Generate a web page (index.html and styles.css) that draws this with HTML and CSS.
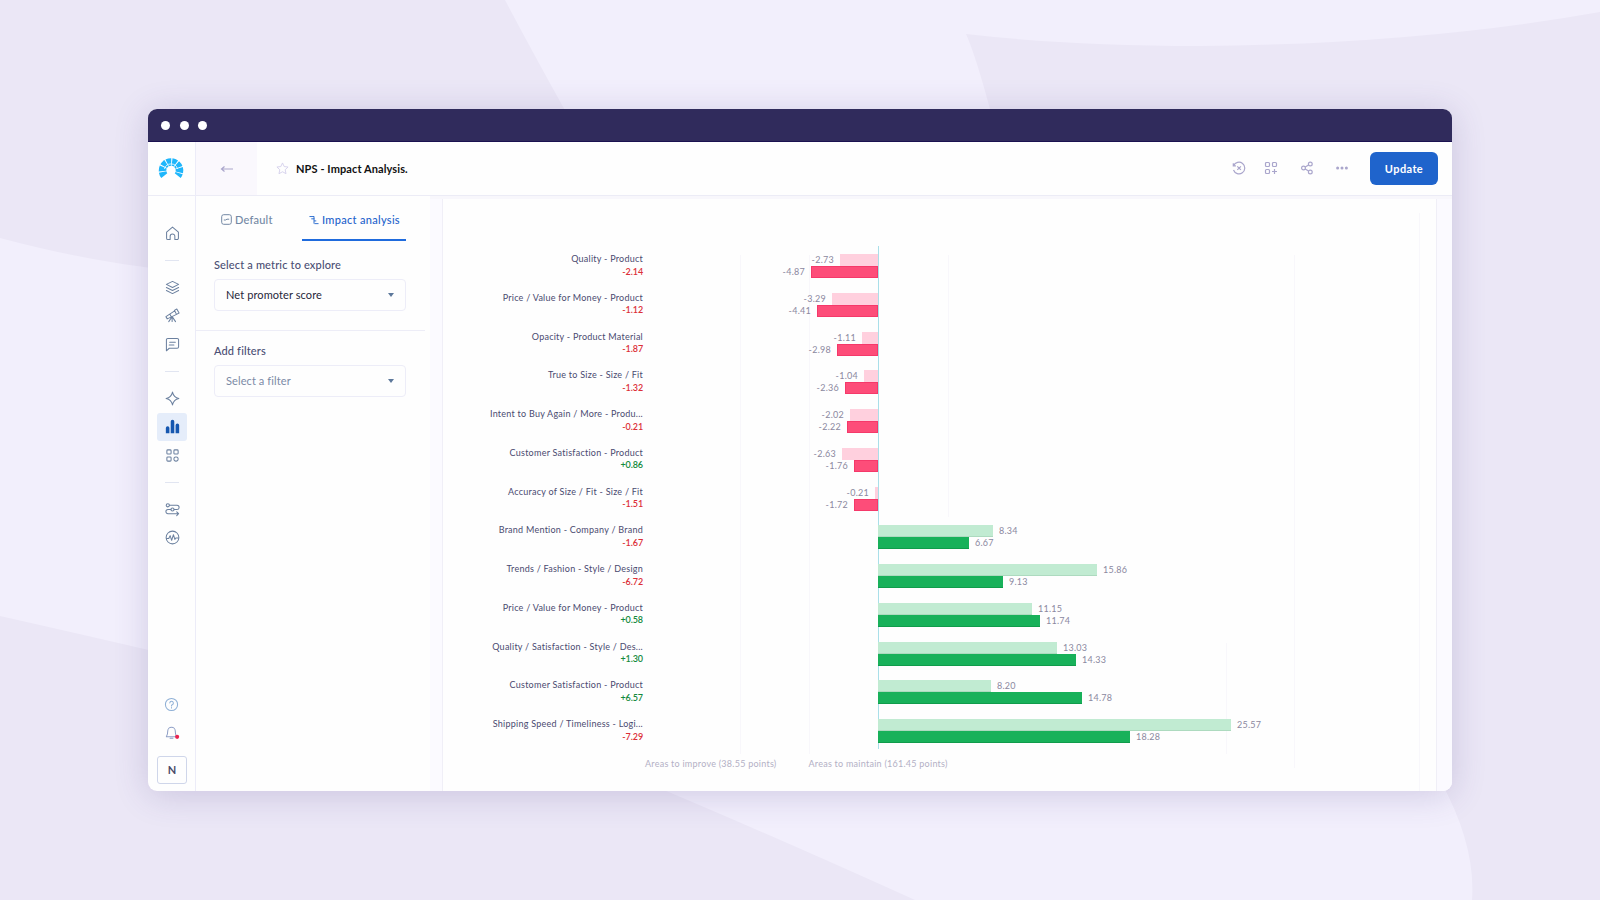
FILE: index.html
```html
<!DOCTYPE html>
<html lang="en">
<head>
    <meta charset="UTF-8">
    <meta name="viewport" content="width=device-width, initial-scale=1.0">
    <title>NPS - Impact Analysis</title>
    <link rel="stylesheet" href="styles.css">
</head>
<body>
    <svg class="backdrop" viewBox="0 0 1600 900" fill="#f2effc">
        <path d="M505 0H1600V12Q1420 44 1200 46Q1070 46 966 34Q982 70 1010 190H610Q550 85 505 0Z"/>
        <path d="M0 238Q90 262 170 270V655Q80 634 0 616Z"/>
        <path d="M640 780Q760 830 915 900H1472Q1476 845 1440 780Z"/>
    </svg>

    <div class="window">
        <div class="titlebar"><i></i><i></i><i></i></div>

        <div class="app">
            <nav class="sidebar">
                <div class="logo">
                    <svg width="26" height="22" viewBox="0 0 26 22" fill="none">
                        <path d="M6.300 17.700A8.500 8.500 0 1 1 19.700 17.700" stroke="#1fb6fb" stroke-width="7.600" stroke-dasharray="4.100 .850"/>
                        <path d="M6.500 11A6.700 6.700 0 0 1 19.500 11" stroke="#fff" stroke-width=".800"/>
                    </svg>
                </div>
                <div class="menu">
                    <a class="item"><svg viewBox="0 0 16 16"><path d="M1.700 6.500L8 1.200l6.300 5.300V13a1.500 1.500 0 0 1-1.500 1.500h-2.300V11a2.500 2.500 0 0 0-5 0v3.500H3.200A1.500 1.500 0 0 1 1.700 13z"/></svg></a>
                    <hr>
                    <a class="item"><svg viewBox="0 0 16 16"><path d="M8 1.500l6.500 3.200L8 8 1.500 4.700zM1.500 8L8 11.200 14.500 8M1.500 11.200L8 14.500l6.500-3.300"/></svg></a>
                    <a class="item"><svg viewBox="0 0 16 16"><path d="M1 9.200L10.300 3l2 3.800L2.400 11.600zM10 2.500L12.600 1 15 5.400l-2.700 1.400M5.200 6.600l1.500 2.700M7.600 9.500v5M7 10l-3 4.500M8.200 10l3 4.500"/></svg></a>
                    <a class="item"><svg viewBox="0 0 16 16"><path d="M3 1.500h10A1.500 1.500 0 0 1 14.500 3v7.500A1.500 1.500 0 0 1 13 12H4.500l-3 2.700V3A1.500 1.500 0 0 1 3 1.500zM5 5.500h6M4.500 8.500h5"/></svg></a>
                    <hr>
                    <a class="item"><svg viewBox="0 0 16 16"><path d="M8 1.200Q9.200 6.800 14.800 8 9.200 9.200 8 14.800 6.800 9.200 1.200 8 6.800 6.800 8 1.200z"/></svg></a>
                    <a class="item active"><svg viewBox="0 0 16 16"><path d="M.9 9.700a1.900 1.900 0 0 1 3.800 0v5.500H.9zM6.100 2.700a1.900 1.900 0 0 1 3.800 0v12.500H6.100zM11.300 6.700a1.900 1.900 0 0 1 3.800 0v8.500h-3.800z"/></svg></a>
                    <a class="item"><svg viewBox="0 0 16 16"><rect x="2" y="2" width="4.500" height="4.500" rx="1"/><rect x="9.500" y="2" width="4.500" height="4.500" rx="1"/><rect x="2" y="9.500" width="4.500" height="4.500" rx="1"/><rect x="9.500" y="9.500" width="4.500" height="4.500" rx="2"/></svg></a>
                    <hr>
                    <a class="item"><svg viewBox="0 0 16 16"><circle cx="3" cy="3.500" r="1.700"/><circle cx="8" cy="8" r="1.700"/><path d="M4.700 3.500h8.100a2.200 2.200 0 0 1 0 4.500H9.700M6.300 8H3.200a2.200 2.200 0 0 0 0 4.500h10M12.500 10.500l2 2-2 2"/></svg></a>
                    <a class="item"><svg viewBox="0 0 16 16"><circle cx="8" cy="8" r="6.800"/><path d="M1.500 9H4l1.500-3 1.600 5L9 5l1.500 5 1-1.500h3"/></svg></a>
                </div>
                <div class="menu-bottom">
                    <a class="item help"><svg viewBox="0 0 16 16"><circle cx="8" cy="8" r="6.500"/><path d="M6.200 6.300a1.900 1.900 0 1 1 2.600 2Q8 8.600 8 9.500M8 11.200v.6"/></svg></a>
                    <a class="item bell"><svg viewBox="0 0 16 16"><path d="M2.500 12.500Q4 10.500 4 6.500a4 4 0 0 1 8 0q0 4 1.500 6zM6.500 14.200h3"/><circle class="dot" cx="14" cy="12.600" r="2.200"/></svg></a>
                    <div class="avatar">N</div>
                </div>
            </nav>

            <div class="main">
                <header class="header">
                    <a class="back"><svg width="14" height="10" viewBox="0 0 14 10"><path d="M13 5H1.500M4.500 2.500L1.500 5l3 2.500"/></svg></a>
                    <svg class="star" width="13" height="13" viewBox="0 0 14 14"><path d="M7 1l1.800 3.900 4.200.5-3.100 2.900.9 4.300L7 10.500l-3.800 2.100.9-4.300L1 5.400l4.200-.5z"/></svg>
                    <h1>NPS - Impact Analysis.</h1>
                    <div class="actions">
                        <svg width="14" height="14" viewBox="0 0 14 14"><path d="M1.600 4.800A5.800 5.800 0 1 1 1.500 9M1.300 2.300v2.600h2.600M5.300 5.300l3.600 3.600M8.900 5.300L5.300 8.900"/></svg>
                        <svg width="14" height="14" viewBox="0 0 14 14"><rect x="1.500" y="1.500" width="4" height="4" rx="1"/><rect x="8.500" y="1.500" width="4" height="4" rx="1"/><rect x="1.500" y="8.500" width="4" height="4" rx="1"/><path d="M8 10.500h5M10.500 8v5"/></svg>
                        <svg class="share" width="14" height="14" viewBox="0 0 14 14"><circle cx="3.500" cy="7" r="1.900"/><circle cx="10.300" cy="3" r="1.900"/><circle cx="10.300" cy="11" r="1.900"/><path d="M5.200 6l3.400-2M5.200 8l3.400 2"/></svg>
                        <svg class="more" width="14" height="14" viewBox="0 0 14 14"><circle cx="2.600" cy="7" r="1.500"/><circle cx="7" cy="7" r="1.500"/><circle cx="11.400" cy="7" r="1.500"/></svg>
                    </div>
                    <button class="update">Update</button>
                </header>

                <div class="content">
                    <aside class="panel">
                        <div class="tabs">
                            <a class="tab"><svg width="11" height="11" viewBox="0 0 11 11"><rect x=".7" y=".7" width="9.600" height="9.600" rx="2"/><path d="M2.800 6h1.700L6 5.200h2.200"/></svg>Default</a>
                            <a class="tab selected"><svg width="10" height="10" viewBox="0 0 11 10"><path d="M.5 1.200h5M2.500 3.700H6M5.500 1v8M5.500 6H8M6 9h4.500"/></svg>Impact analysis</a>
                        </div>
                        <div class="field">
                            <label>Select a metric to explore</label>
                            <div class="select">Net promoter score</div>
                        </div>
                        <div class="field filters">
                            <label>Add filters</label>
                            <div class="select empty">Select a filter</div>
                        </div>
                    </aside>

                    <section class="board">
                        <div class="chart">
                            <svg class="grid" width="993" height="580" viewBox="0 0 993 580">
                                <path d="M297.500 42V541M366.500 42V541M505.500 42V304M783.500 430V541M851.500 42V555M976.500 0V580"/>
                                <path class="zero" d="M435.500 33V536"/>
                            </svg>
                            <div class="row neg"><div class="name">Quality - Product<b class="down">-2.14</b></div><div class="bars"><p>-2.73<i style="width:38px"></i></p><p>-4.87<i style="width:67px"></i></p></div></div>
                            <div class="row neg"><div class="name">Price / Value for Money - Product<b class="down">-1.12</b></div><div class="bars"><p>-3.29<i style="width:46px"></i></p><p>-4.41<i style="width:61px"></i></p></div></div>
                            <div class="row neg"><div class="name">Opacity - Product Material<b class="down">-1.87</b></div><div class="bars"><p>-1.11<i style="width:16px"></i></p><p>-2.98<i style="width:41px"></i></p></div></div>
                            <div class="row neg"><div class="name">True to Size - Size / Fit<b class="down">-1.32</b></div><div class="bars"><p>-1.04<i style="width:14px"></i></p><p>-2.36<i style="width:33px"></i></p></div></div>
                            <div class="row neg"><div class="name">Intent to Buy Again / More - Produ...<b class="down">-0.21</b></div><div class="bars"><p>-2.02<i style="width:28px"></i></p><p>-2.22<i style="width:31px"></i></p></div></div>
                            <div class="row neg"><div class="name">Customer Satisfaction - Product<b class="up">+0.86</b></div><div class="bars"><p>-2.63<i style="width:36px"></i></p><p>-1.76<i style="width:24px"></i></p></div></div>
                            <div class="row neg"><div class="name">Accuracy of Size / Fit - Size / Fit<b class="down">-1.51</b></div><div class="bars"><p>-0.21<i style="width:3px"></i></p><p>-1.72<i style="width:24px"></i></p></div></div>
                            <div class="row pos"><div class="name">Brand Mention - Company / Brand<b class="down">-1.67</b></div><div class="bars"><p><i style="width:115px"></i>8.34</p><p><i style="width:91px"></i>6.67</p></div></div>
                            <div class="row pos"><div class="name">Trends / Fashion - Style / Design<b class="down">-6.72</b></div><div class="bars"><p><i style="width:219px"></i>15.86</p><p><i style="width:125px"></i>9.13</p></div></div>
                            <div class="row pos"><div class="name">Price / Value for Money - Product<b class="up">+0.58</b></div><div class="bars"><p><i style="width:154px"></i>11.15</p><p><i style="width:162px"></i>11.74</p></div></div>
                            <div class="row pos"><div class="name">Quality / Satisfaction - Style / Des...<b class="up">+1.30</b></div><div class="bars"><p><i style="width:179px"></i>13.03</p><p><i style="width:198px"></i>14.33</p></div></div>
                            <div class="row pos"><div class="name">Customer Satisfaction - Product<b class="up">+6.57</b></div><div class="bars"><p><i style="width:113px"></i>8.20</p><p><i style="width:204px"></i>14.78</p></div></div>
                            <div class="row pos"><div class="name">Shipping Speed / Timeliness - Logi...<b class="down">-7.29</b></div><div class="bars"><p><i style="width:353px"></i>25.57</p><p><i style="width:252px"></i>18.28</p></div></div>
                            <div class="legend"><span>Areas to improve (38.55 points)</span><span>Areas to maintain (161.45 points)</span></div>
                        </div>
                    </section>
                </div>
            </div>
        </div>
    </div>
</body>
</html>
```
FILE: styles.css
```css
* {
    box-sizing: border-box;
}

body {
    margin: 0;
    width: 1600px;
    height: 900px;
    overflow: hidden;
    padding: 109px 148px 0;
    background: #ebe7f6;
    font-family: Lato, "Open Sans", sans-serif;
    font-size: 11px;
    color: #26263a;
}

svg {
    display: block;
    flex: none;
}

p, h1 {
    margin: 0;
}

.backdrop {
    position: absolute;
    top: 0;
    left: 0;
    width: 1600px;
    height: 900px;
    z-index: -1;
}

.window {
    width: 1304px;
    height: 682px;
    border-radius: 9px;
    overflow: hidden;
    background: #fefefe;
    box-shadow: 0 4px 34px rgba(70, 55, 130, .2);
}

.titlebar {
    display: flex;
    align-items: center;
    gap: 9.500px;
    height: 33px;
    padding-left: 13px;
    background: #302b5c;
    border-bottom: 1px solid #1a1150;
}

.titlebar i {
    width: 9px;
    height: 9px;
    border-radius: 50%;
    background: #fff;
}

.app {
    display: flex;
    height: 649px;
}

/* sidebar */
.sidebar {
    display: flex;
    flex-direction: column;
    width: 48px;
    border-right: 1px solid #ececf8;
}

.logo {
    display: flex;
    align-items: center;
    justify-content: center;
    height: 54px;
    padding: 0 1px 0 0;
    border-bottom: 1px solid #ececf6;
}

.menu {
    flex: 1;
    padding: 23px 0 0 9px;
}

.item {
    display: flex;
    align-items: center;
    justify-content: center;
    width: 30px;
    height: 28.500px;
    border-radius: 3px;
}

.item svg {
    width: 15px;
    height: 15px;
    overflow: visible;
    fill: none;
    stroke: #6b809f;
    stroke-width: 1.100;
    stroke-linejoin: round;
    stroke-linecap: round;
}

.item.active {
    background: #e5edfa;
}

.item.active svg {
    fill: #1557b0;
    stroke: none;
}

.item.help svg {
    stroke: #8fb0d6;
}

.item.bell svg {
    stroke: #8f9fc6;
}

.item .dot {
    fill: #ea2350;
    stroke: none;
}

.menu hr {
    width: 14px;
    height: 1px;
    margin: 12px 0 12.500px 8px;
    border: 0;
    background: #e1e5f1;
}

.menu-bottom {
    padding: 0 0 7px 9px;
}

.menu-bottom .item {
    width: 29px;
}

.avatar {
    display: flex;
    align-items: center;
    justify-content: center;
    width: 30px;
    height: 28px;
    margin-top: 9px;
    padding-bottom: 1px;
    border: 1px solid #cfd6ea;
    border-radius: 3px;
    font-weight: bold;
    color: #4a4a68;
}

/* header */
.main {
    flex: 1;
    display: flex;
    flex-direction: column;
}

.header {
    display: flex;
    align-items: center;
    height: 54px;
    padding-right: 14px;
    border-bottom: 1px solid #ececf6;
}

.header svg {
    fill: none;
    stroke: #aaa6cc;
    stroke-width: 1.200;
}

.back {
    display: flex;
    align-items: center;
    justify-content: center;
    width: 61px;
    height: 53px;
    background: #faf8fd;
}

.header .star {
    margin: 0 7px 0 19px;
    stroke: #d5d1ec;
    stroke-width: 1;
}

h1 {
    font-size: 11px;
    color: #111;
    letter-spacing: .1px;
}

.actions {
    display: flex;
    gap: 18px;
    margin-left: auto;
    margin-right: 21px;
    padding-bottom: 1px;
}

.actions .share {
    margin: 0 3.500px 0 4px;
}

.actions .more {
    fill: #aaa6cc;
    stroke: none;
}

.update {
    width: 68px;
    height: 33px;
    padding: 0;
    border: 0;
    border-radius: 6px;
    background: #1f64cc;
    color: #fff;
    font: bold 11px Lato, sans-serif;
    letter-spacing: .4px;
}

/* left panel */
.content {
    flex: 1;
    display: flex;
}

.panel {
    width: 234px;
}

.tabs {
    display: flex;
    gap: 16px;
    height: 45px;
    padding-left: 11px;
}

.tab {
    display: flex;
    align-items: center;
    gap: 3px;
    width: 79px;
    padding: 2px 0 0 14px;
    color: #7388a4;
    letter-spacing: .2px;
    font-weight: 500;
    white-space: nowrap;
}

.tab svg {
    fill: none;
    stroke: currentColor;
    stroke-width: 1;
}

.tab.selected {
    width: 104px;
    padding: 4px 0 0 7px;
    border-bottom: 2px solid #1f6bdd;
    color: #1f64cc;
    letter-spacing: .3px;
}

.field {
    height: 89px;
    padding: 16px 0 0 18px;
}

.field.filters {
    margin-right: 5px;
    padding-top: 12px;
    border-top: 1px solid #ededf7;
}

.field label {
    display: block;
    line-height: 16px;
    color: #4b4f74;
    font-weight: 500;
    letter-spacing: .15px;
}

.select {
    display: flex;
    align-items: center;
    justify-content: space-between;
    width: 192px;
    height: 32px;
    margin-top: 6px;
    padding: 0 11px 2px;
    border: 1px solid #ededf8;
    border-radius: 4px;
    letter-spacing: .1px;
}

.select.empty {
    color: #7b8aa6;
}

.select::after {
    content: "";
    margin-top: 1px;
    border: 3px solid transparent;
    border-top: 4px solid #5d789b;
    border-bottom: 0;
}

/* chart */
.board {
    flex: 1;
    padding: 0 15px 0 12px;
    background: #fbfaff;
    border-top: 3px solid #f8f7fc;
}

.chart {
    position: relative;
    height: 100%;
    padding-top: 55px;
    background: #fefefe;
    border: 1px solid #f0eff7;
    border-width: 0 1px;
}

.grid {
    position: absolute;
    top: 14px;
    left: 0;
    fill: none;
    stroke: #f8f7fb;
}

.grid .zero {
    stroke: #a9dfe9;
}

.row {
    display: flex;
    position: relative;
    height: 38.750px;
}

.name {
    width: 200px;
    margin-top: -1px;
    text-align: right;
    font-size: 9px;
    line-height: 12.500px;
    letter-spacing: .25px;
    color: #4a4a70;
    white-space: nowrap;
}

.name b {
    display: block;
    font-weight: 600;
    letter-spacing: -.1px;
}

.down {
    color: #dc2f38;
}

.up {
    color: #138a3c;
}

.bars {
    width: 235px;
}

.bars p {
    display: flex;
    align-items: center;
    gap: 6px;
    height: 12px;
    font-size: 9px;
    line-height: 10px;
    letter-spacing: .25px;
    color: #8b889f;
}

.bars i {
    flex: none;
    height: 12px;
}

.neg p {
    justify-content: flex-end;
}

.pos .bars {
    width: 400px;
    margin-left: 235px;
}

.neg i {
    background: #ffd0de;
}

.neg p + p i {
    background: #fd4d79;
    border: 1px solid #f5396a;
}

.pos i {
    background: #c1ebd2;
    border-bottom: 1px solid #addabf;
}

.pos p + p i {
    background: #18b15a;
    border-bottom: 1px solid #109c4b;
}

.legend {
    display: flex;
    gap: 32px;
    padding-left: 202px;
    font-size: 9px;
    letter-spacing: .25px;
    color: #b3b0c5;
}
```
